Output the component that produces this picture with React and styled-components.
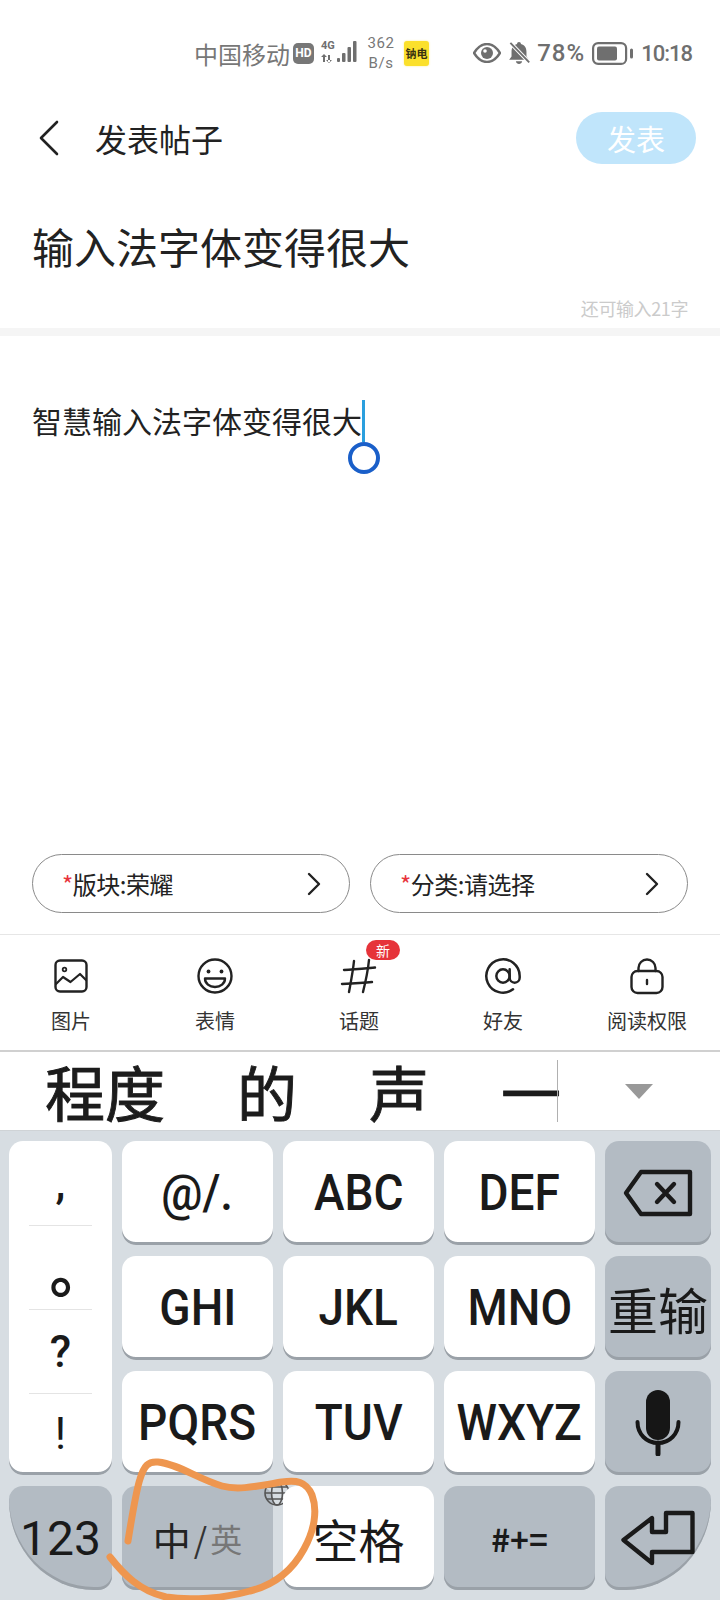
import styled, { createGlobalStyle } from "styled-components";
import { AtSign } from "lucide-react";

const GlobalStyle = createGlobalStyle`
  html, body {
    margin: 0;
    padding: 0;
    background: #ffffff;
  }
  * {
    box-sizing: border-box;
  }
`;

const cjk = `"Noto Sans CJK SC", "Noto Sans", sans-serif`;
const latin = `Roboto, "Noto Sans CJK SC", sans-serif`;

function ImageIcon() {
  return (
    <svg width="34" height="34" viewBox="0 0 34 34" fill="none" stroke="#222" strokeWidth="2.4" strokeLinejoin="round" strokeLinecap="round">
      <rect x="1.500" y="1.500" width="31" height="31" rx="4.500" />
      <circle cx="10.500" cy="10.500" r="1.800" strokeWidth="1.800" />
      <path d="M2 25l7-7 7.500 5L26 15l6 6" strokeWidth="2.200" />
    </svg>
  );
}

function FaceIcon() {
  return (
    <svg width="36" height="36" viewBox="0 0 36 36" fill="none" stroke="#222" strokeWidth="2.400" strokeLinejoin="round">
      <circle cx="18" cy="18" r="16.500" />
      <circle cx="11.500" cy="13.500" r="1.900" fill="#222" stroke="none" />
      <circle cx="24.500" cy="13.500" r="1.900" fill="#222" stroke="none" />
      <path d="M8 20.500h20c0 5-4.500 8.500-10 8.500S8 25.500 8 20.500z" />
    </svg>
  );
}

function HashIcon() {
  return (
    <svg width="38" height="38" viewBox="0 0 38 38" fill="none" stroke="#222" strokeWidth="2.400" strokeLinecap="round">
      <path d="M4 13c10-.5 20-1.500 31-2.500" />
      <path d="M2 27c10-.5 20-1 30-2" />
      <path d="M14 4c-1 10-3 20-5 31" />
      <path d="M29 3c-1 10-3 20-6 32" />
    </svg>
  );
}

function LockIcon() {
  return (
    <svg width="36" height="38" viewBox="0 0 36 38" fill="none" stroke="#222" strokeWidth="2.400" strokeLinecap="round" strokeLinejoin="round">
      <rect x="2.500" y="14" width="31" height="22" rx="6" />
      <path d="M9.500 14V11a8.500 8.500 0 0 1 17 0v3" />
      <path d="M18 23v4" />
    </svg>
  );
}

function Chevron() {
  return (
    <svg width="14" height="24" viewBox="0 0 14 24" fill="none" stroke="#222" strokeWidth="2.400" strokeLinecap="round" strokeLinejoin="round">
      <path d="M2 2l10 10L2 22" />
    </svg>
  );
}

function BackspaceIcon() {
  return (
    <svg width="70" height="48" viewBox="0 0 70 48" fill="none" stroke="#1a1a1a" strokeWidth="4.400" strokeLinejoin="round" strokeLinecap="round">
      <path d="M18 3h49v42H18L3 24z" />
      <path d="M34 15l17 18M51 15L34 33" />
    </svg>
  );
}

function MicIcon() {
  return (
    <svg width="46" height="66" viewBox="0 0 46 66" fill="none">
      <rect x="11" y="0" width="24" height="50" rx="12" fill="#161616" />
      <path d="M2.500 32c0 12 9 21 20.500 21s20.500-9 20.500-21" stroke="#161616" strokeWidth="4" strokeLinecap="round" />
      <path d="M23 53v11" stroke="#161616" strokeWidth="5" strokeLinecap="round" />
    </svg>
  );
}

function EnterIcon() {
  return (
    <svg width="76" height="56" viewBox="0 0 76 56" fill="none" stroke="#1a1a1a" strokeWidth="4.400" strokeLinejoin="round" strokeLinecap="round">
      <path d="M3.500 30L32 8v14h14V3h26.500v39H32v11z" />
    </svg>
  );
}

function GlobeIcon() {
  return (
    <svg width="28" height="28" viewBox="0 0 28 28" fill="none" stroke="#555" strokeWidth="1.600">
      <circle cx="14" cy="14" r="12" />
      <ellipse cx="14" cy="14" rx="5.500" ry="12" />
      <path d="M2 14h24M4 8h20M4 20h20" />
    </svg>
  );
}

const toolItems = [
  { label: "图片", icon: <ImageIcon /> },
  { label: "表情", icon: <FaceIcon /> },
  { label: "话题", icon: <HashIcon />, badge: "新" },
  { label: "好友", icon: <AtSign size={40} strokeWidth={1.500} color="#222" /> },
  { label: "阅读权限", icon: <LockIcon /> },
];

const letterKeys = ["@/.", "ABC", "DEF", "GHI", "JKL", "MNO", "PQRS", "TUV", "WXYZ"];

const renderLetters = (from, to) =>
  letterKeys.slice(from, to).map((t) => (
    <LetterKey key={t}>
      <LetterText>{t}</LetterText>
    </LetterKey>
  ));

export default function App() {
  return (
    <Page>
      <GlobalStyle />
      <StatusBar>
        <Carrier>中国移动</Carrier>
        <HdBadge>HD</HdBadge>
        <NetworkIcon>
          <NetworkLabel>4G</NetworkLabel>
          <svg width="36" height="24" viewBox="0 0 36 24" fill="#6f6f6f">
            <path d="M2 14h2v7H2zM0 16l3-3 3 3zM7 14h2v7H7zM5 19l3 3 3-3z" />
            <rect x="16" y="17" width="3" height="4" rx="1" />
            <rect x="21" y="12" width="3.500" height="9" rx="1" />
            <rect x="26.500" y="6" width="3.500" height="15" rx="1" />
            <rect x="32" y="0" width="3.500" height="21" rx="1" />
          </svg>
        </NetworkIcon>
        <Speed>
          <span>362</span>
          <span>B/s</span>
        </Speed>
        <AppBadge>钠电</AppBadge>
        <StatusRight>
          <svg width="28" height="20" viewBox="0 0 28 20">
            <path d="M1 10C5 3.500 9 1 14 1s9 2.500 13 9c-4 6.500-8 9-13 9S5 16.500 1 10z" fill="none" stroke="#6f6f6f" strokeWidth="2.400" />
            <circle cx="14" cy="10" r="6" fill="#6f6f6f" />
            <circle cx="12" cy="8" r="1.800" fill="#fff" />
          </svg>
          <svg width="22" height="26" viewBox="0 0 28 30">
            <path d="M14 1c1.500 0 2.500 1 2.500 2.500 4.500 1 7 5 7 10v6l3 4H1.500l3-4v-6c0-5 2.500-9 7-10C11.500 2 12.500 1 14 1z" fill="#6f6f6f" />
            <path d="M10 25.500h8c-.5 2.500-2 3.500-4 3.500s-3.500-1-4-3.500z" fill="#6f6f6f" />
            <path d="M2 1l25 26" stroke="#fff" strokeWidth="5" />
            <path d="M3 2l24 25" stroke="#6f6f6f" strokeWidth="2.400" />
          </svg>
          <Percent>78%</Percent>
          <svg width="41" height="23" viewBox="0 0 41 23">
            <rect x="1.100" y="1.100" width="33" height="20.800" rx="5" fill="none" stroke="#6f6f6f" strokeWidth="2.200" />
            <rect x="5" y="4.500" width="20" height="14" rx="2" fill="#6f6f6f" />
            <rect x="38" y="6.500" width="3" height="10" rx="1.500" fill="#6f6f6f" />
          </svg>
          <Clock>10:18</Clock>
        </StatusRight>
      </StatusBar>

      <Header>
        <HeaderLeft>
          <svg width="22" height="36" viewBox="0 0 22 36" fill="none" stroke="#222" strokeWidth="2.600" strokeLinecap="round" strokeLinejoin="round">
            <path d="M19 2L3 18l16 16" />
          </svg>
          <HeaderTitle>发表帖子</HeaderTitle>
        </HeaderLeft>
        <PublishButton>发表</PublishButton>
      </Header>

      <TitleBlock>
        <TitleText>输入法字体变得很大</TitleText>
        <Counter>还可输入21字</Counter>
      </TitleBlock>
      <ThickDivider />

      <Body>
        <BodyText>
          智慧输入法字体变得很大
          <Caret>
            <CaretHandle />
          </Caret>
        </BodyText>
      </Body>

      <PillRow>
        <Pill>
          <PillText>
            <Star>*</Star>版块:荣耀
          </PillText>
          <Chevron />
        </Pill>
        <Pill>
          <PillText>
            <Star>*</Star>分类:请选择
          </PillText>
          <Chevron />
        </Pill>
      </PillRow>

      <Toolbar>
        {toolItems.map((item) => (
          <ToolItem key={item.label}>
            <ToolIcon>
              {item.icon}
              {item.badge && <NewBadge>{item.badge}</NewBadge>}
            </ToolIcon>
            <ToolLabel>{item.label}</ToolLabel>
          </ToolItem>
        ))}
      </Toolbar>

      <CandidateBar>
        <CandidateStrip>
          <Candidate>程度</Candidate>
          <Candidate>的</Candidate>
          <Candidate>声</Candidate>
          <Candidate>一</Candidate>
        </CandidateStrip>
        <CandidateSep />
        <ExpandCell>
          <Triangle />
        </ExpandCell>
      </CandidateBar>

      <Keyboard>
        <PunctKey>
          <PunctCell>,</PunctCell>
          <PeriodCell>。</PeriodCell>
          <PunctCell>?</PunctCell>
          <BangCell>!</BangCell>
        </PunctKey>
        {renderLetters(0, 3)}
        <GrayKey>
          <BackspaceIcon />
        </GrayKey>
        {renderLetters(3, 6)}
        <GrayKey $size={50}>重输</GrayKey>
        {renderLetters(6, 9)}
        <GrayKey>
          <MicIcon />
        </GrayKey>
        <NumKey>123</NumKey>
        <LangKey>
          <GlobeSpot>
            <GlobeIcon />
          </GlobeSpot>
          中<LangSlash>/</LangSlash>
          <LangOff>英</LangOff>
        </LangKey>
        <SpaceKey>空格</SpaceKey>
        <GrayKey $size={32} $bold>
          #+=
        </GrayKey>
        <EnterKey>
          <EnterIcon />
        </EnterKey>
        <Scribble viewBox="0 1130 720 470" fill="none">
          <path
            d="M128 1540C132 1515 136 1490 140 1478C144 1465 148 1460 158 1461C178 1463 198 1478 222 1485C240 1490 262 1484 282 1481C296 1479 306 1480 312 1494C318 1510 314 1530 304 1548C292 1570 274 1584 250 1590C226 1597 190 1600 166 1596C140 1590 124 1574 110 1556"
            stroke="#ee964f"
            strokeWidth="7"
            strokeLinecap="round"
            strokeLinejoin="round"
          />
        </Scribble>
      </Keyboard>
    </Page>
  );
}

const Page = styled.div`
  width: 720px;
  height: 1600px;
  display: flex;
  flex-direction: column;
  overflow: hidden;
  background: #ffffff;
  font-family: ${cjk};
  color: #222222;
`;

const StatusBar = styled.div`
  height: 106px;
  flex: none;
  display: flex;
  align-items: center;
  padding-left: 194px;
  padding-right: 28px;
  color: #6f6f6f;
`;

const Carrier = styled.span`
  font-size: 24px;
  color: #777777;
`;

const HdBadge = styled.span`
  margin-left: 3px;
  width: 21px;
  height: 21px;
  border-radius: 5px;
  background: #777777;
  color: #ffffff;
  font: 700 12px ${latin};
  display: flex;
  align-items: center;
  justify-content: center;
`;

const NetworkIcon = styled.span`
  position: relative;
  margin-left: 7px;
  width: 36px;
  height: 24px;
  display: block;
`;

const NetworkLabel = styled.span`
  position: absolute;
  left: 0;
  top: -2px;
  font: 700 11px ${latin};
  color: #6f6f6f;
`;

const Speed = styled.span`
  margin-left: 9px;
  width: 30px;
  display: flex;
  flex-direction: column;
  align-items: center;
  font: 400 15px/20px ${latin};
  color: #777777;
  letter-spacing: 0.5px;
`;

const AppBadge = styled.span`
  margin-left: 8px;
  width: 25px;
  height: 25px;
  border-radius: 3px;
  background: #fbe02c;
  box-shadow: 0 0 2px rgba(251, 224, 44, 0.6);
  color: #3a3210;
  font: 700 11px/25px ${cjk};
  text-align: center;
  white-space: nowrap;
`;

const StatusRight = styled.div`
  margin-left: auto;
  display: flex;
  align-items: center;
  gap: 7px;
`;

const Percent = styled.span`
  font: 500 24px ${latin};
  color: #6f6f6f;
  letter-spacing: 1px;
`;

const Clock = styled.span`
  font: 500 22px ${latin};
  color: #6f6f6f;
  letter-spacing: -1px;
  margin-left: 1px;
`;

const Header = styled.div`
  height: 64px;
  flex: none;
  display: flex;
  align-items: center;
  justify-content: space-between;
  padding: 0 24px 0 38px;
`;

const HeaderLeft = styled.div`
  display: flex;
  align-items: center;
  gap: 35px;
`;

const HeaderTitle = styled.span`
  font-size: 32px;
  color: #222222;
`;

const PublishButton = styled.div`
  width: 120px;
  height: 52px;
  border-radius: 26px;
  background: #c0e5fb;
  color: #ffffff;
  font-size: 29px;
  display: flex;
  align-items: center;
  justify-content: center;
`;

const TitleBlock = styled.div`
  flex: none;
  padding: 46px 32px 8px;
`;

const TitleText = styled.div`
  font-size: 42px;
  line-height: 60px;
  color: #222222;
`;

const Counter = styled.div`
  margin-top: 20px;
  text-align: right;
  font-size: 18px;
  line-height: 24px;
  letter-spacing: -0.4px;
  color: #cbcbcb;
`;

const ThickDivider = styled.div`
  height: 8px;
  flex: none;
  background: #f5f5f5;
`;

const Body = styled.div`
  flex: 1;
  min-height: 0;
  padding: 62px 32px 0;
`;

const BodyText = styled.div`
  font-size: 30px;
  line-height: 44px;
  color: #222222;
  display: flex;
  align-items: flex-start;
`;

const Caret = styled.span`
  position: relative;
  display: block;
  width: 3px;
  height: 42px;
  margin-top: 2px;
  background: #2a9fde;
`;

const CaretHandle = styled.span`
  position: absolute;
  left: -14.5px;
  top: 42px;
  width: 32px;
  height: 32px;
  border-radius: 50%;
  border: 4px solid #1a5fc9;
  background: #ffffff;
`;

const PillRow = styled.div`
  flex: none;
  display: flex;
  gap: 20px;
  padding: 0 32px 21px;
`;

const Pill = styled.div`
  flex: 1;
  height: 59px;
  border: 1px solid #8a8a8a;
  border-radius: 30px;
  display: flex;
  align-items: center;
  justify-content: space-between;
  padding: 0 28px 0 29px;
`;

const PillText = styled.span`
  font-size: 24px;
  letter-spacing: -0.5px;
  color: #222222;
`;

const Star = styled.span`
  color: #e8333c;
`;

const Toolbar = styled.div`
  flex: none;
  height: 118px;
  border-top: 1px solid #e6e6e6;
  border-bottom: 2px solid #d0d0d0;
  margin-left: -1px;
  display: grid;
  grid-template-columns: repeat(5, 144px);
`;

const ToolItem = styled.div`
  display: flex;
  flex-direction: column;
  align-items: center;
  padding-top: 21px;
`;

const ToolIcon = styled.div`
  position: relative;
  height: 40px;
  display: flex;
  align-items: center;
  justify-content: center;
`;

const NewBadge = styled.span`
  position: absolute;
  left: 26px;
  top: -16px;
  width: 34px;
  height: 20px;
  border-radius: 10px;
  background: #e6333a;
  color: #ffffff;
  font-size: 14px;
  line-height: 20px;
  text-align: center;
`;

const ToolLabel = styled.span`
  margin-top: 10px;
  font-size: 20px;
  line-height: 30px;
  color: #333333;
`;

const CandidateBar = styled.div`
  flex: none;
  height: 78px;
  display: flex;
  align-items: center;
`;

const CandidateStrip = styled.div`
  width: 557px;
  flex: none;
  padding-left: 45px;
  display: flex;
  gap: 72px;
  align-items: center;
`;

const CandidateSep = styled.div`
  width: 1px;
  height: 62px;
  flex: none;
  background: #b0b0b0;
`;

const Candidate = styled.span`
  font-size: 60px;
  font-weight: 400;
  -webkit-text-stroke: 0.9px #1c1c1c;
  line-height: 62px;
  color: #1c1c1c;
  white-space: nowrap;
`;

const ExpandCell = styled.div`
  flex: 1;
  display: flex;
  justify-content: center;
`;

const Triangle = styled.span`
  width: 0;
  height: 0;
  border-left: 14px solid transparent;
  border-right: 14px solid transparent;
  border-top: 15px solid #999999;
`;

const Keyboard = styled.div`
  position: relative;
  flex: none;
  height: 470px;
  background: #d7dde2;
  border-top: 1px solid #cfd3d6;
  padding: 10px 9px 0;
  display: grid;
  grid-template-columns: 103px repeat(3, 151px) 106px;
  grid-auto-rows: 104px;
  column-gap: 10px;
  row-gap: 11px;
`;

const Key = styled.div`
  position: relative;
  border-radius: 14px;
  display: flex;
  align-items: center;
  justify-content: center;
  color: #1a1a1a;
`;

const LetterKey = styled(Key)`
  background: #ffffff;
  box-shadow: inset 0 -3px 0 #9aa1a8;
`;

const LetterText = styled.span`
  font: 500 50px ${latin};
  transform: scaleX(0.92);
  white-space: nowrap;
`;

const GrayKey = styled(Key)`
  background: #b3bbc3;
  box-shadow: inset 0 -3px 0 #9aa1a8;
  font-family: ${cjk};
  font-size: ${(p) => p.$size || 40}px;
  font-weight: ${(p) => (p.$bold ? 700 : 400)};
  white-space: nowrap;
`;

const PunctKey = styled.div`
  grid-row: span 3;
  border-radius: 14px;
  background: #ffffff;
  box-shadow: inset 0 -3px 0 #9aa1a8;
  display: grid;
  grid-template-columns: minmax(0, 1fr);
  grid-template-rows: 85px 84px 84px 1fr;
  padding: 0 20px;
`;

const PunctCell = styled.div`
  min-width: 0;
  display: flex;
  align-items: center;
  justify-content: center;
  font: 500 44px ${latin};
  color: #1a1a1a;
  border-bottom: 1px solid #e4e4e4;
`;

const PeriodCell = styled(PunctCell)`
  font: 700 58px/1 ${cjk};
  padding-left: 36px;
  padding-bottom: 2px;
`;

const BangCell = styled(PunctCell)`
  font-weight: 400;
  border-bottom: none;
  padding-bottom: 2px;
`;

const NumKey = styled(GrayKey)`
  border-bottom-left-radius: 85px 90px;
  font: 400 48px ${latin};
`;

const LangKey = styled(GrayKey)`
  font-size: 38px;
  color: #222222;
`;

const LangSlash = styled.span`
  font-size: 34px;
  margin: 0 3px;
  color: #333333;
`;

const LangOff = styled.span`
  font-size: 32px;
  color: #777777;
`;

const GlobeSpot = styled.span`
  position: absolute;
  right: -18px;
  top: -7px;
  line-height: 0;
`;

const SpaceKey = styled(Key)`
  background: #ffffff;
  box-shadow: inset 0 -3px 0 #9aa1a8;
  font-size: 46px;
`;

const EnterKey = styled(GrayKey)`
  border-bottom-right-radius: 85px 90px;
`;

const Scribble = styled.svg`
  position: absolute;
  left: 0;
  top: 0;
  width: 720px;
  height: 470px;
  pointer-events: none;
`;
